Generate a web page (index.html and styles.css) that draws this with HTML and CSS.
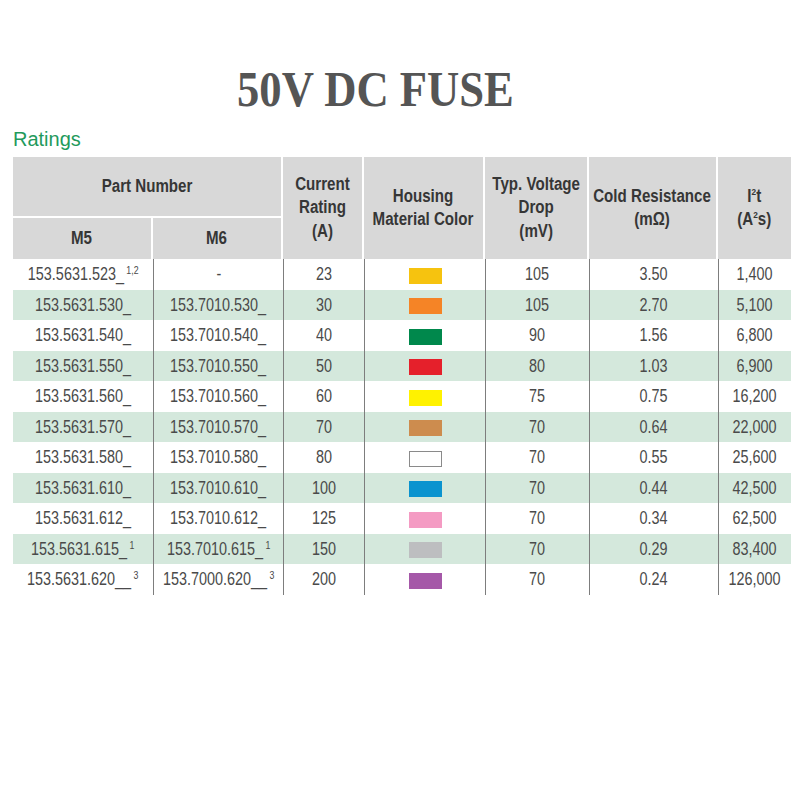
FILE: index.html
```html
<!DOCTYPE html>
<html>
<head>
<meta charset="utf-8">
<link rel="stylesheet" href="styles.css">
</head>
<body>
<h1 class="title"><span class="tt">50V DC FUSE</span></h1>
<h2 class="section">Ratings</h2>
<table class="ratings">
  <colgroup>
    <col class="c-m5"><col class="c-m6"><col class="c-cur"><col class="c-house"><col class="c-drop"><col class="c-cold"><col class="c-i2t">
  </colgroup>
  <thead>
    <tr class="h1">
      <th colspan="2"><span class="n">Part Number</span></th>
      <th rowspan="2"><span class="n">Current<br>Rating<br>(A)</span></th>
      <th rowspan="2"><span class="n">Housing<br>Material Color</span></th>
      <th rowspan="2"><span class="n">Typ. Voltage<br>Drop<br>(mV)</span></th>
      <th rowspan="2"><span class="n">Cold Resistance<br>(mΩ)</span></th>
      <th rowspan="2" class="last"><span class="n">I<sup>2</sup>t<br>(A<sup>2</sup>s)</span></th>
    </tr>
    <tr class="h2">
      <th><span class="n">M5</span></th>
      <th><span class="n">M6</span></th>
    </tr>
  </thead>
  <tbody>
    <tr><td><span class="n">153.5631.523_<sup>1,2</sup></span></td><td><span class="n">-</span></td><td><span class="n">23</span></td><td><span class="sw gold"></span></td><td><span class="n">105</span></td><td><span class="n">3.50</span></td><td><span class="n">1,400</span></td></tr>
    <tr class="alt"><td><span class="n">153.5631.530_</span></td><td><span class="n">153.7010.530_</span></td><td><span class="n">30</span></td><td><span class="sw orange"></span></td><td><span class="n">105</span></td><td><span class="n">2.70</span></td><td><span class="n">5,100</span></td></tr>
    <tr><td><span class="n">153.5631.540_</span></td><td><span class="n">153.7010.540_</span></td><td><span class="n">40</span></td><td><span class="sw green"></span></td><td><span class="n">90</span></td><td><span class="n">1.56</span></td><td><span class="n">6,800</span></td></tr>
    <tr class="alt"><td><span class="n">153.5631.550_</span></td><td><span class="n">153.7010.550_</span></td><td><span class="n">50</span></td><td><span class="sw red"></span></td><td><span class="n">80</span></td><td><span class="n">1.03</span></td><td><span class="n">6,900</span></td></tr>
    <tr><td><span class="n">153.5631.560_</span></td><td><span class="n">153.7010.560_</span></td><td><span class="n">60</span></td><td><span class="sw yellow"></span></td><td><span class="n">75</span></td><td><span class="n">0.75</span></td><td><span class="n">16,200</span></td></tr>
    <tr class="alt"><td><span class="n">153.5631.570_</span></td><td><span class="n">153.7010.570_</span></td><td><span class="n">70</span></td><td><span class="sw tan"></span></td><td><span class="n">70</span></td><td><span class="n">0.64</span></td><td><span class="n">22,000</span></td></tr>
    <tr><td><span class="n">153.5631.580_</span></td><td><span class="n">153.7010.580_</span></td><td><span class="n">80</span></td><td><span class="sw white"></span></td><td><span class="n">70</span></td><td><span class="n">0.55</span></td><td><span class="n">25,600</span></td></tr>
    <tr class="alt"><td><span class="n">153.5631.610_</span></td><td><span class="n">153.7010.610_</span></td><td><span class="n">100</span></td><td><span class="sw blue"></span></td><td><span class="n">70</span></td><td><span class="n">0.44</span></td><td><span class="n">42,500</span></td></tr>
    <tr><td><span class="n">153.5631.612_</span></td><td><span class="n">153.7010.612_</span></td><td><span class="n">125</span></td><td><span class="sw pink"></span></td><td><span class="n">70</span></td><td><span class="n">0.34</span></td><td><span class="n">62,500</span></td></tr>
    <tr class="alt"><td><span class="n">153.5631.615_<sup>1</sup></span></td><td><span class="n">153.7010.615_<sup>1</sup></span></td><td><span class="n">150</span></td><td><span class="sw gray"></span></td><td><span class="n">70</span></td><td><span class="n">0.29</span></td><td><span class="n">83,400</span></td></tr>
    <tr><td><span class="n">153.5631.620__<sup>3</sup></span></td><td><span class="n">153.7000.620__<sup>3</sup></span></td><td><span class="n">200</span></td><td><span class="sw purple"></span></td><td><span class="n">70</span></td><td><span class="n">0.24</span></td><td><span class="n">126,000</span></td></tr>
  </tbody>
</table>
</body>
</html>
```

FILE: styles.css
```css
html, body {
  margin: 0;
  padding: 0;
  background: #fff;
}

body {
  padding: 0 0 0 13px;
}

.title {
  margin: 64px 0 0 224px;
  font-family: "Liberation Serif", serif;
  font-weight: bold;
  font-size: 51px;
  line-height: 51px;
  color: #555555;
}

.tt {
  display: inline-block;
  white-space: nowrap;
  transform: scaleX(0.875);
  transform-origin: left center;
}

.section {
  margin: 12px 0 6px 0;
  font-family: "Liberation Sans", sans-serif;
  font-weight: normal;
  font-size: 20px;
  line-height: 24px;
  color: #1f9a5c;
}

.ratings {
  border-collapse: separate;
  border-spacing: 0;
  table-layout: fixed;
  width: 778px;
  font-family: "Liberation Sans", sans-serif;
  font-size: 18px;
  color: #4a4a4a;
}

.c-m5 { width: 140px; }
.c-m6 { width: 130px; }
.c-cur { width: 81px; }
.c-house { width: 121px; }
.c-drop { width: 104px; }
.c-cold { width: 129px; }
.c-i2t { width: 73px; }

.n {
  display: inline-block;
  white-space: nowrap;
  margin: 0 -40px;
  transform: scaleX(0.8);
}

.ratings th {
  background: #d8d8d8;
  color: #363636;
  font-weight: bold;
  font-size: 18px;
  line-height: 23.5px;
  padding: 0;
  text-align: center;
  vertical-align: middle;
  border-right: 2px solid #fff;
  box-sizing: border-box;
}

.ratings th .n {
  transform: scaleX(0.84);
}

.ratings th.last { border-right: none; }

.ratings .h1 th[colspan] {
  height: 61px;
  border-bottom: 2px solid #fff;
}

.ratings .h2 th {
  height: 41px;
}

.ratings sup {
  font-size: 0.55em;
  line-height: 0;
  vertical-align: 0.7em;
}

.ratings td {
  height: 30.5px;
  padding: 0;
  text-align: center;
  vertical-align: middle;
  border-left: 1px solid #7d7d7d;
  line-height: 20px;
  white-space: nowrap;
}

.ratings td:first-child { border-left: none; }

.ratings td sup {
  font-size: 11px;
  vertical-align: 6px;
  margin-left: 3px;
}

.ratings tr.alt td { background: #d4e8dc; }

.sw {
  display: inline-block;
  width: 33px;
  height: 16px;
  vertical-align: middle;
  box-sizing: border-box;
}

.gold { background: #f6c30f; }
.orange { background: #f58426; }
.green { background: #00884c; }
.red { background: #e5202b; }
.yellow { background: #fff200; }
.tan { background: #cd8c4e; }
.white { background: #fff; border: 1px solid #8a8a8a; }
.blue { background: #0a93cf; }
.pink { background: #f49bc3; }
.gray { background: #bdbec0; }
.purple { background: #a558a8; }
```
